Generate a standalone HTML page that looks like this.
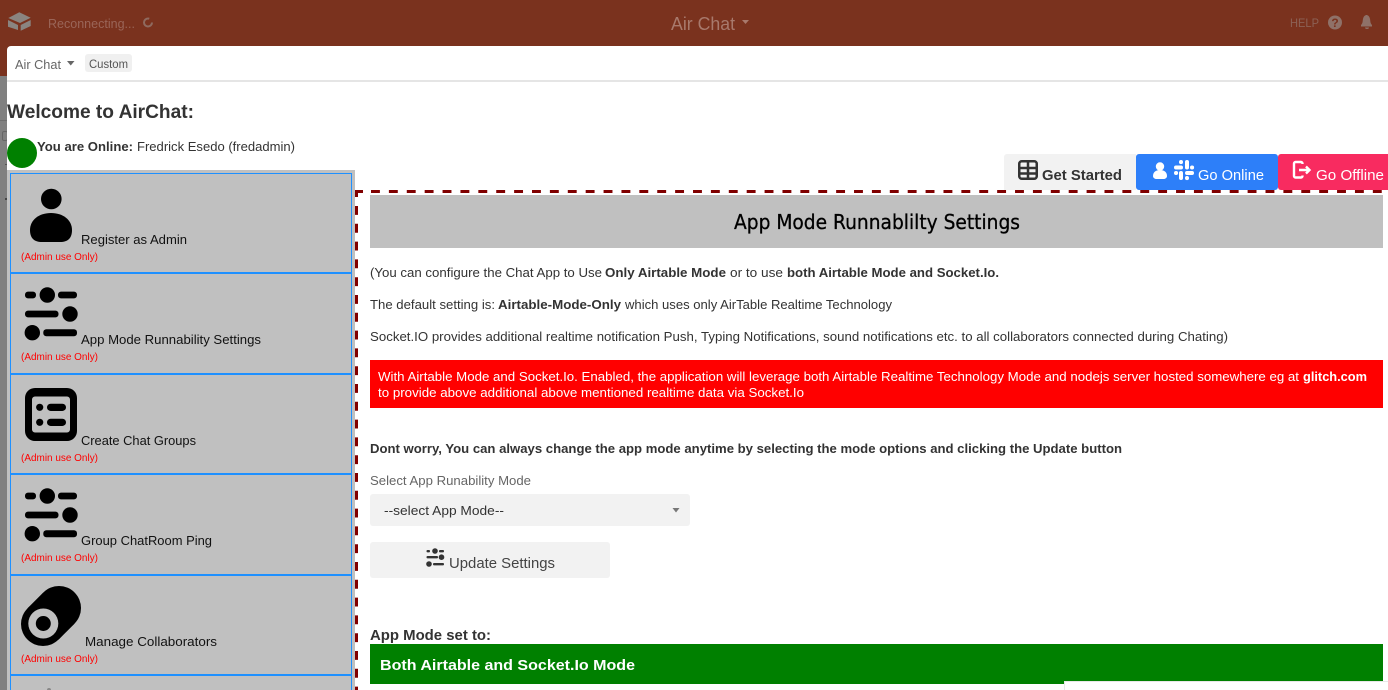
<!DOCTYPE html>
<html lang="en">
<head>
<meta charset="utf-8">
<title>Air Chat</title>
<style>
html,body{margin:0;padding:0;background:#fff;width:1388px;height:690px;overflow:hidden}
svg{display:block;font-family:"Liberation Sans",Arial,sans-serif}
text{white-space:pre}
.b{font-weight:bold}
</style>
</head>
<body>
<svg xmlns="http://www.w3.org/2000/svg" width="1388" height="690" viewBox="0 0 1388 690">
<defs>
<g id="sl">
<rect x="25" y="-3.4" width="11" height="6.8" rx="3"/><circle cx="47.300" cy="0" r="7.700"/><rect x="58" y="-3.4" width="19" height="6.8" rx="3"/>
<rect x="25" y="15.600" width="33.500" height="6.800" rx="3"/><circle cx="70" cy="19" r="7.700"/>
<circle cx="32.300" cy="37.700" r="7.700"/><rect x="43.300" y="34.200" width="33.700" height="7" rx="3"/>
</g>
</defs>
<rect width="1388" height="690" fill="#fff"/>
<!-- header -->
<rect width="1388" height="76" fill="#7a321e"/>
<rect y="76" width="7" height="614" fill="#808080"/>
<rect x="0" y="120" width="7" height="1" fill="#6e6e6e"/>
<rect x="2.500" y="131.500" width="5" height="9" rx="1.500" fill="none" stroke="#666"/>
<rect x="5" y="198" width="2" height="2" fill="#444"/>
<rect x="5" y="164" width="2" height="1" fill="#555"/>
<g fill="#8a8480">
<path d="M8.300 18 L19.300 12.300 L30.700 17.700 L20 23 Z"/>
<path d="M8 20 L18 25 L18 30 L8 26.700 Z"/>
<path d="M20.700 25 L30.700 20 L30.700 26 L20.700 30.700 Z"/>
</g>
<text x="48" y="28" font-size="13" fill="#9a6558" textLength="87" lengthAdjust="spacingAndGlyphs">Reconnecting...</text>
<circle cx="148" cy="22.500" r="4" fill="none" stroke="#8f6a5f" stroke-width="2" stroke-dasharray="20 5"/>
<text x="671" y="30" font-size="18" fill="#a8796c" textLength="64" lengthAdjust="spacingAndGlyphs">Air Chat</text>
<path d="M742 20 h7 l-3.500 4 z" fill="#a8796c"/>
<text x="1290" y="27" font-size="12" fill="#8c6155" textLength="29" lengthAdjust="spacingAndGlyphs">HELP</text>
<circle cx="1335" cy="22.500" r="7" fill="#8f7168"/>
<text x="1335" y="27" font-size="12" font-weight="bold" fill="#7a321e" text-anchor="middle">?</text>
<path d="M1361 25 c2 -2 1.500 -4 2 -6 c.5 -3 2.500 -4 3.500 -4 s3 1 3.500 4 c.5 2 0 4 2 6 v1.500 h-11 z M1365 27.500 h4 a2 1.500 0 0 1 -4 0 z" fill="#8f7168"/>
<!-- modal -->
<path d="M7 690 V50 a4 4 0 0 1 4 -4 H1388 V690 Z" fill="#fff"/>
<rect x="7" y="80" width="1381" height="2" fill="#e5e5e5"/>
<text x="15" y="69" font-size="13" fill="#666" textLength="46" lengthAdjust="spacingAndGlyphs">Air Chat</text>
<path d="M67 61 h7.500 l-3.750 4.500 z" fill="#666"/>
<rect x="85" y="54" width="47" height="18" rx="3" fill="#f0f0f0"/>
<text x="89" y="68" font-size="11.500" fill="#555" textLength="39" lengthAdjust="spacingAndGlyphs">Custom</text>
<text x="7" y="118" font-size="19" class="b" fill="#333" textLength="187" lengthAdjust="spacingAndGlyphs">Welcome to AirChat:</text>
<circle cx="22" cy="153" r="15" fill="#008000"/>
<text x="37" y="151" font-size="13" class="b" fill="#333" textLength="96" lengthAdjust="spacingAndGlyphs">You are Online:</text>
<text x="137" y="151" font-size="13" fill="#333" textLength="158" lengthAdjust="spacingAndGlyphs">Fredrick Esedo (fredadmin)</text>
<!-- sidebar -->
<rect x="7" y="170" width="348" height="520" fill="#c0c0c0"/>
<path d="M10.500 690 V173.500 H351.500 V690" fill="none" stroke="#1e90ff"/>
<g fill="#1e90ff">
<rect x="10" y="272" width="342" height="2"/>
<rect x="10" y="373" width="342" height="2"/>
<rect x="10" y="473" width="342" height="2"/>
<rect x="10" y="574" width="342" height="2"/>
<rect x="10" y="674" width="342" height="2"/>
</g>
<g fill="#000">
<circle cx="51.300" cy="199" r="10.300"/>
<path d="M30 230 C30 220 39 213 51 213 S72 220 72 230 C72 238 68 242 60 242 H42 C34 242 30 238 30 230 Z"/>
<use href="#sl" y="295"/>
<path fill-rule="evenodd" d="M35 388 H67 a10 10 0 0 1 10 10 V431 a10 10 0 0 1 -10 10 H35 a10 10 0 0 1 -10 -10 V398 a10 10 0 0 1 10 -10 Z M35 396.500 a3 3 0 0 0 -3 3 V429.500 a3 3 0 0 0 3 3 H67 a3 3 0 0 0 3 -3 V399.500 a3 3 0 0 0 -3 -3 Z"/>
<circle cx="39.700" cy="407.300" r="3.600"/><circle cx="39.700" cy="422.300" r="3.600"/>
<rect x="47" y="403.700" width="19" height="7.300" rx="3.650"/><rect x="47" y="418.700" width="19" height="7.300" rx="3.650"/>
<use href="#sl" y="496"/>
<circle cx="43" cy="624" r="22"/>
<circle cx="59" cy="608" r="22"/>
<path d="M27.400 608.400 L43.400 592.400 L74.600 623.600 L58.600 639.600 Z"/>
<circle cx="43.300" cy="623.500" r="15" fill="#c0c0c0"/>
<circle cx="43.300" cy="623.500" r="7.500"/>
</g>
<circle cx="49" cy="690" r="2" fill="#888"/>
<g font-size="13" fill="#111">
<text x="81" y="244" textLength="106" lengthAdjust="spacingAndGlyphs">Register as Admin</text>
<text x="81" y="344" textLength="180" lengthAdjust="spacingAndGlyphs">App Mode Runnability Settings</text>
<text x="81" y="445" textLength="115" lengthAdjust="spacingAndGlyphs">Create Chat Groups</text>
<text x="81" y="545" textLength="131" lengthAdjust="spacingAndGlyphs">Group ChatRoom Ping</text>
<text x="85" y="646" textLength="132" lengthAdjust="spacingAndGlyphs">Manage Collaborators</text>
</g>
<g font-size="10" fill="#f00">
<text x="21" y="260" textLength="77" lengthAdjust="spacingAndGlyphs">(Admin use Only)</text>
<text x="21" y="360" textLength="77" lengthAdjust="spacingAndGlyphs">(Admin use Only)</text>
<text x="21" y="461" textLength="77" lengthAdjust="spacingAndGlyphs">(Admin use Only)</text>
<text x="21" y="561" textLength="77" lengthAdjust="spacingAndGlyphs">(Admin use Only)</text>
<text x="21" y="662" textLength="77" lengthAdjust="spacingAndGlyphs">(Admin use Only)</text>
</g>
<!-- dashed panel border -->
<path d="M371 191.500 H1382" fill="none" stroke="#800000" stroke-width="3" stroke-dasharray="8.900 8.990"/>
<path d="M356.500 206 V690" fill="none" stroke="#800000" stroke-width="3" stroke-dasharray="8.900 8.900"/>
<path d="M355 190 H363 V193 H358 V197 H355 Z" fill="#800000"/>
<!-- tab buttons -->
<path d="M1004 190 V157 a3 3 0 0 1 3 -3 H1136 V190 Z" fill="#f2f2f2"/>
<path d="M1136 190 V157 a3 3 0 0 1 3 -3 H1275 a3 3 0 0 1 3 3 V187 a3 3 0 0 1 -3 3 H1139 a3 3 0 0 1 -3 -3 Z" fill="#2d7ff9"/>
<path d="M1278 187 V157 a3 3 0 0 1 3 -3 H1388 V190 H1281 a3 3 0 0 1 -3 -3 Z" fill="#f82b60"/>
<g fill="none" stroke="#333" stroke-width="2.500">
<rect x="1019.250" y="161.250" width="17.500" height="17.500" rx="2.500"/>
<path d="M1019 168 H1037 M1019 173.500 H1037 M1028 161 V179"/>
</g>
<text x="1042" y="180" font-size="15" class="b" fill="#333" textLength="80" lengthAdjust="spacingAndGlyphs">Get Started</text>
<circle cx="1160" cy="166.500" r="4.200" fill="#fff"/>
<path d="M1153 176 c0 -4 3 -6 7 -6 s7 2 7 6 c0 2 -2 3 -3.500 3 h-7 c-1.500 0 -3.500 -1 -3.500 -3 z" fill="#fff"/>
<g stroke="#fff" stroke-width="4" stroke-linecap="round" fill="none">
<path d="M1176 167.500 H1181"/><path d="M1181 162 V162.100"/>
<path d="M1187 162 V167.500"/><path d="M1192 167.500 H1192.100"/>
<path d="M1187 173 H1192"/><path d="M1187 178 V178.100"/>
<path d="M1181 173 V178"/><path d="M1176 173 H1176.100"/>
</g>
<text x="1198" y="180" font-size="15" fill="#fff" textLength="66" lengthAdjust="spacingAndGlyphs">Go Online</text>
<path d="M1302.500 164 V163.500 a1.500 1.500 0 0 0 -1.500 -1.500 H1295.500 a1.500 1.500 0 0 0 -1.500 1.500 V176 a1.500 1.500 0 0 0 1.500 1.500 H1301 a1.500 1.500 0 0 0 1.500 -1.500 V175.500 M1299 170 H1309 M1306 166.500 L1309.500 170 L1306 173.500" fill="none" stroke="#fff" stroke-width="2.400"/>
<text x="1316" y="180" font-size="15" fill="#fff" textLength="68" lengthAdjust="spacingAndGlyphs">Go Offline</text>
<!-- title -->
<rect x="370" y="195" width="1013" height="53" fill="#c0c0c0"/>
<text x="734" y="229" font-size="20" fill="#000" stroke="#000" stroke-width=".3" font-family="'DejaVu Sans',sans-serif" textLength="286" lengthAdjust="spacingAndGlyphs">App Mode Runnablilty Settings</text>
<!-- paragraphs -->
<g font-size="12.500" fill="#333">
<text x="370" y="277" textLength="232" lengthAdjust="spacingAndGlyphs">(You can configure the Chat App to Use</text>
<text x="605" y="277" class="b" textLength="121" lengthAdjust="spacingAndGlyphs">Only Airtable Mode</text>
<text x="730" y="277" textLength="53" lengthAdjust="spacingAndGlyphs">or to use</text>
<text x="787" y="277" class="b" textLength="212" lengthAdjust="spacingAndGlyphs">both Airtable Mode and Socket.Io.</text>
<text x="370" y="309" textLength="125" lengthAdjust="spacingAndGlyphs">The default setting is:</text>
<text x="498" y="309" class="b" textLength="123" lengthAdjust="spacingAndGlyphs">Airtable-Mode-Only</text>
<text x="625" y="309" textLength="267" lengthAdjust="spacingAndGlyphs">which uses only AirTable Realtime Technology</text>
<text x="370" y="341" textLength="858" lengthAdjust="spacingAndGlyphs">Socket.IO provides additional realtime notification Push, Typing Notifications, sound notifications etc. to all collaborators connected during Chating)</text>
</g>
<rect x="370" y="360" width="1013" height="48" fill="#f00"/>
<g font-size="12.500" fill="#fff">
<text x="378" y="381" textLength="921" lengthAdjust="spacingAndGlyphs">With Airtable Mode and Socket.Io. Enabled, the application will leverage both Airtable Realtime Technology Mode and nodejs server hosted somewhere eg at</text>
<text x="1303" y="381" class="b" textLength="64" lengthAdjust="spacingAndGlyphs">glitch.com</text>
<text x="378" y="397" textLength="426" lengthAdjust="spacingAndGlyphs">to provide above additional above mentioned realtime data via Socket.Io</text>
</g>
<text x="370" y="453" font-size="12.500" class="b" fill="#333" textLength="752" lengthAdjust="spacingAndGlyphs">Dont worry, You can always change the app mode anytime by selecting the mode options and clicking the Update button</text>
<text x="370" y="485" font-size="13" fill="#666" textLength="161" lengthAdjust="spacingAndGlyphs">Select App Runability Mode</text>
<rect x="370" y="494" width="320" height="32" rx="3" fill="#f2f2f2"/>
<text x="384" y="515" font-size="13" fill="#333" textLength="120" lengthAdjust="spacingAndGlyphs">--select App Mode--</text>
<path d="M672.500 508 h7 l-3.500 4.500 z" fill="#777"/>
<rect x="370" y="542" width="240" height="36" rx="3" fill="#f2f2f2"/>
<g fill="#333">
<rect x="426.500" y="550" width="3.500" height="2.400" rx="1"/><circle cx="435" cy="551" r="2.800"/><rect x="439" y="550" width="5" height="2.400" rx="1"/>
<rect x="426.500" y="556" width="11.500" height="2.400" rx="1"/><circle cx="441.500" cy="557.200" r="2.800"/>
<circle cx="429" cy="564" r="2.800"/><rect x="433" y="563" width="11" height="2.400" rx="1"/>
</g>
<text x="449" y="568" font-size="15" fill="#444" textLength="106" lengthAdjust="spacingAndGlyphs">Update Settings</text>
<text x="370" y="640" font-size="15" class="b" fill="#333" textLength="121" lengthAdjust="spacingAndGlyphs">App Mode set to:</text>
<rect x="370" y="644" width="1013" height="40" fill="#008000"/>
<text x="380" y="670" font-size="15" class="b" fill="#fff" textLength="255" lengthAdjust="spacingAndGlyphs">Both Airtable and Socket.Io Mode</text>
<rect x="1064" y="681" width="324" height="9" fill="#e8e8e8"/>
<rect x="1065" y="682" width="323" height="8" fill="#fff"/>
</svg>
</body>
</html>
